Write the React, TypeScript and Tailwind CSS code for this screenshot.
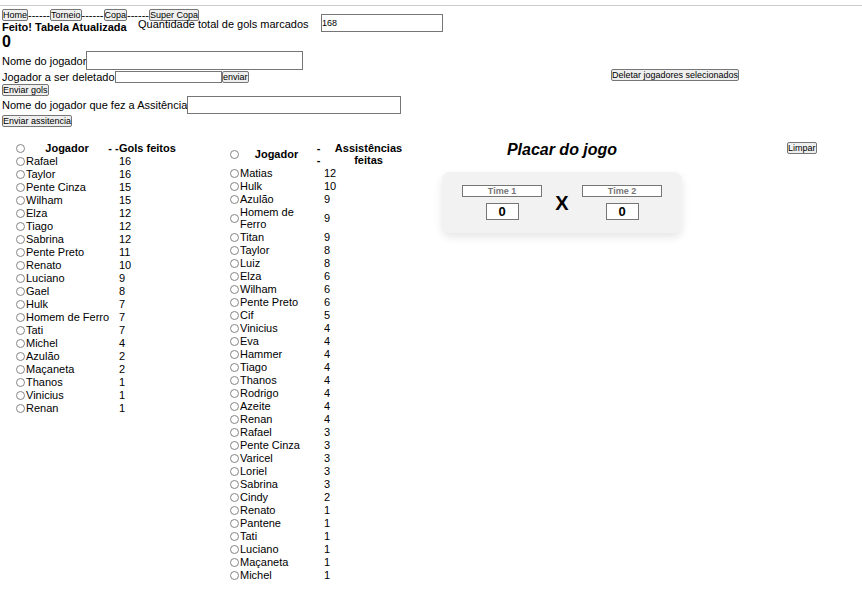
import { useState, type ReactNode } from "react";

type Row = [string, number];

const goals: Row[] = [
  ["Rafael", 16], ["Taylor", 16], ["Pente Cinza", 15], ["Wilham", 15], ["Elza", 12],
  ["Tiago", 12], ["Sabrina", 12], ["Pente Preto", 11], ["Renato", 10], ["Luciano", 9],
  ["Gael", 8], ["Hulk", 7], ["Homem de Ferro", 7], ["Tati", 7], ["Michel", 4],
  ["Azulão", 2], ["Maçaneta", 2], ["Thanos", 1], ["Vinicius", 1], ["Renan", 1],
];

const assists: Row[] = [
  ["Matias", 12], ["Hulk", 10], ["Azulão", 9], ["Homem de Ferro", 9], ["Titan", 9],
  ["Taylor", 8], ["Luiz", 8], ["Elza", 6], ["Wilham", 6], ["Pente Preto", 6],
  ["Cif", 5], ["Vinicius", 4], ["Eva", 4], ["Hammer", 4], ["Tiago", 4],
  ["Thanos", 4], ["Rodrigo", 4], ["Azeite", 4], ["Renan", 4], ["Rafael", 3],
  ["Pente Cinza", 3], ["Varicel", 3], ["Loriel", 3], ["Sabrina", 3], ["Cindy", 2],
  ["Renato", 1], ["Pantene", 1], ["Tati", 1], ["Luciano", 1], ["Maçaneta", 1], ["Michel", 1],
];

function Button({ children }: { children: ReactNode }) {
  return (
    <button
      type="button"
      className="h-3 shrink-0 rounded-[2px] border border-[#767676] bg-[#efefef] text-[9px] leading-[10px] whitespace-nowrap"
    >
      {children}
    </button>
  );
}

function Field({ id, label, row, input }: { id: string; label: string; row: string; input: string }) {
  return (
    <div className={`flex items-center ${row}`}>
      <label htmlFor={id} className="whitespace-nowrap">{label}</label>
      <input id={id} type="text" className={`min-w-0 flex-1 border border-[#767676] bg-white text-[9px] ${input}`} />
    </div>
  );
}

function Radio({ group, label }: { group: string; label: string }) {
  return (
    <input
      type="radio"
      name={group}
      aria-label={label}
      className="mx-px block size-[9px] appearance-none rounded-full border border-[#858585] bg-white checked:bg-[#0075ff]"
    />
  );
}

function PlayerTable({ name, rows, columns, dash, heading, className = "" }: {
  name: string;
  rows: Row[];
  columns: string[];
  dash: ReactNode;
  heading: string;
  className?: string;
}) {
  return (
    <table className={`shrink-0 table-fixed self-start ${className}`}>
      <colgroup>
        {columns.map((c, i) => <col key={i} className={c} />)}
      </colgroup>
      <thead>
        <tr>
          <th className="p-0 pb-px"><Radio group={name} label="Nenhum" /></th>
          <th className="p-0 pb-px">Jogador</th>
          <th className="p-0 pb-px">{dash}</th>
          <th className="p-0 pb-px">{heading}</th>
        </tr>
      </thead>
      <tbody>
        {rows.map(([player, total]) => (
          <tr key={player}>
            <td className="p-0 pb-px"><Radio group={name} label={player} /></td>
            <td className="p-0 pb-px">{player}</td>
            <td className="p-0 pb-px" />
            <td className="p-0 pb-px">{total}</td>
          </tr>
        ))}
      </tbody>
    </table>
  );
}

function Team({ name }: { name: string }) {
  const [score, setScore] = useState("0");
  return (
    <div className="flex w-20 flex-col items-center gap-1.5">
      <input
        type="text"
        aria-label={name}
        placeholder={name}
        className="h-3 w-20 border border-[#767676] bg-white text-center text-[9px] font-bold placeholder:text-[#757575]"
      />
      <input
        type="text"
        aria-label={`Gols ${name}`}
        value={score}
        onChange={(e) => setScore(e.target.value)}
        className="h-[17px] w-[33px] border border-[#767676] bg-white text-center text-[13px] leading-none font-bold"
      />
    </div>
  );
}

export default function App() {
  const links = ["Home", "Torneio", "Copa", "Super Copa"];
  return (
    <div className="bg-white pt-[5px] font-['Liberation_Sans',Arial,sans-serif] text-[11px] leading-3 text-black">
      <hr className="border-t border-[#ccc]" />
      <header className="flex pt-[3px] pl-0.5">
        <div className="w-[609px] shrink-0">
          <nav className="flex">
            {links.map((l, i) => (
              <span key={l} className="flex">
                {i > 0 && <span>------</span>}
                <Button>{l}</Button>
              </span>
            ))}
          </nav>
          <div className="flex h-[30px]">
            <div className="w-[136px]">
              <h2 className="font-bold whitespace-nowrap">Feito! Tabela Atualizada</h2>
              <p className="text-base leading-[18px] font-bold">0</p>
            </div>
            <div className="-mt-[7px] flex h-[18px] items-center">
              <label htmlFor="total" className="w-[183px] pt-0.5">Quantidade total de gols marcados</label>
              <input
                id="total"
                type="text"
                defaultValue="168"
                className="h-[18px] w-[122px] border border-[#767676] bg-white text-[9px]"
              />
            </div>
          </div>
          <form>
            <Field id="scorer" label="Nome do jogador" row="w-[301px]" input="h-[19px]" />
            <div className="flex pt-px">
              <Field id="removed" label="Jogador a ser deletado" row="w-[220px]" input="h-3" />
              <Button>enviar</Button>
            </div>
            <div className="flex pt-px"><Button>Enviar gols</Button></div>
            <Field id="assistant" label="Nome do jogador que fez a Assitência" row="w-[399px]" input="h-[18px]" />
            <div className="flex pt-px"><Button>Enviar assitencia</Button></div>
          </form>
        </div>
        <div className="flex items-start pt-[60px]"><Button>Deletar jogadores selecionados</Button></div>
      </header>
      <main className="flex pt-[15px] pl-[15px]">
        <PlayerTable
          name="goals"
          className="w-[159px] whitespace-nowrap"
          rows={goals}
          columns={["w-[11px]", "w-[82px]", "w-[11px]", "w-[55px]"]}
          dash="- -"
          heading="Gols feitos"
        />
        <PlayerTable
          name="assists"
          className="ml-[55px] w-[184px]"
          rows={assists}
          columns={["w-[11px]", "w-[73px]", "w-[11px]", "w-[89px]"]}
          dash={<>-<br />-</>}
          heading="Assistências feitas"
        />
        <section className="ml-[29px] w-60 shrink-0">
          <h1 className="text-center text-base leading-4 font-bold italic">Placar do jogo</h1>
          <div className="mt-3.5 flex items-center justify-between rounded-lg bg-[#f2f2f2] px-5 py-[13px] shadow-[0_4px_8px_rgba(0,0,0,0.1)]">
            <Team name="Time 1" />
            <span className="text-xl leading-5 font-bold">X</span>
            <Team name="Time 2" />
          </div>
        </section>
        <div className="ml-[105px] flex items-start"><Button>Limpar</Button></div>
      </main>
    </div>
  );
}
